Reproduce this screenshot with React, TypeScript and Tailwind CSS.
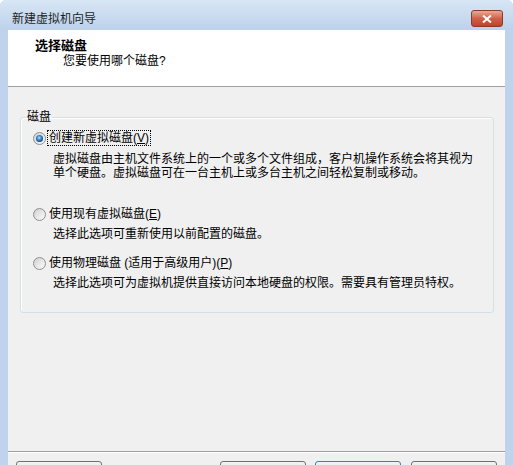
// Windows 7 style "新建虚拟机向导" dialog – select disk page

const Radio = ({ checked }: { checked?: boolean }) => (
  <span className="flex h-[13px] w-[13px] shrink-0 items-center justify-center rounded-full border border-[#8e8f8f] bg-linear-to-br from-[#d0d0d0] to-[#fbfbfb]">
    {checked ? (
      <span className="h-[7px] w-[7px] rounded-full bg-[radial-gradient(circle_at_45%_40%,#b6e4fb_0%,#3d8fd0_35%,#0f3f78_75%)]" />
    ) : (
      <span className="h-[7px] w-[7px] rounded-full bg-linear-to-br from-[#d9d9d9] to-[#f6f6f6]" />
    )}
  </span>
);

const Option = ({
  label,
  hint,
  mnemonic,
  checked,
  focused,
  className,
}: {
  label: string;
  hint: React.ReactNode;
  mnemonic: string;
  checked?: boolean;
  focused?: boolean;
  className?: string;
}) => {
  return (
    <div className={className}>
      <div className="flex h-[16px] items-center">
        <Radio checked={checked} />
        <span
          className={
            "ml-[1px] border px-[1px] leading-[14px] whitespace-nowrap " +
            (focused ? "border-dotted border-black" : "border-transparent")
          }
        >
          {label}(<u>{mnemonic}</u>)
        </span>
      </div>
      {hint}
    </div>
  );
};

// the button captions sit below the window's visible edge, so only the frames show
const WizardButton = ({
  label,
  primary,
  className,
}: {
  label: string;
  primary?: boolean;
  className?: string;
}) => (
  <button
    aria-label={label}
    className={
      "h-[23px] w-[86px] shrink-0 rounded-[3px] border bg-linear-to-b from-[#f2f2f2] to-[#dcdcdc] " +
      (primary ? "border-[#3c7fb1] " : "border-[#707070] ") +
      (className ?? "")
    }
  />
);

export default function App() {
  return (
    <div className="flex h-[465px] w-[513px] flex-col overflow-hidden rounded-t-[6px] bg-[#bfd4ec] font-['Liberation_Sans','Noto_Sans_CJK_SC',sans-serif] text-[12px] text-black">
      {/* title bar */}
      <div className="flex h-[30px] shrink-0 items-start justify-between bg-linear-to-b from-[#d8e6f5] to-[#bcd2eb] pr-[10px] pl-[12px]">
        <span className="mt-[12px] leading-[14px] text-[#1e1e1e]">新建虚拟机向导</span>
        <button className="mt-[10px] flex h-[17px] w-[32px] items-center justify-center rounded-[3px] border border-[#8c3a2c] bg-linear-to-b from-[#e9a796] via-[#d0604a] to-[#c3412b]">
          <svg width="10" height="8" viewBox="0 0 10 8">
            <path d="M1 0.5 L9 7.5 M9 0.5 L1 7.5" stroke="#fff" strokeWidth="2" />
          </svg>
        </button>
      </div>

      {/* client area */}
      <div className="flex min-h-0 flex-1 px-[8px]">
        <div className="flex flex-1 flex-col bg-[#f0f0f0]">
          {/* header */}
          <div className="h-[57px] shrink-0 border-b border-[#a0a0a0] bg-white pt-[8px]">
            <div className="pl-[27px] text-[13px] leading-[16px] font-bold">选择磁盘</div>
            <div className="pl-[55px] leading-[14px]">您要使用哪个磁盘?</div>
          </div>

          {/* group box */}
          <fieldset className="mt-[23px] mr-[11px] ml-[12px] shrink-0 rounded-[3px] border border-[#d5dfe5] shadow-[inset_1px_1px_0_#fff]">
            <legend className="ml-[5px] px-[1px] leading-[14px]">磁盘</legend>
            <div className="pt-[6px] pb-[22px] pl-[12px]">
              <Option
                label="创建新虚拟磁盘"
                mnemonic="V"
                checked
                focused
                hint={
                  <p className="mt-[6px] pl-[20px] leading-[14px] whitespace-nowrap">
                    虚拟磁盘由主机文件系统上的一个或多个文件组成，客户机操作系统会将其视为
                    <br />
                    单个硬盘。虚拟磁盘可在一台主机上或多台主机之间轻松复制或移动。
                  </p>
                }
              />
              <Option
                className="mt-[26px]"
                label="使用现有虚拟磁盘"
                mnemonic="E"
                hint={
                  <p className="mt-[5px] pl-[20px] leading-[14px] whitespace-nowrap">
                    选择此选项可重新使用以前配置的磁盘。
                  </p>
                }
              />
              <Option
                className="mt-[14px]"
                label="使用物理磁盘 (适用于高级用户)"
                mnemonic="P"
                hint={
                  <p className="mt-[5px] pl-[20px] leading-[14px] whitespace-nowrap">
                    选择此选项可为虚拟机提供直接访问本地硬盘的权限。需要具有管理员特权。
                  </p>
                }
              />
            </div>
          </fieldset>

          {/* footer */}
          <div className="mt-[138px] flex shrink-0 border-t border-[#a0a0a0] px-[8px] pt-[9px] shadow-[inset_0_1px_0_#fff]">
            <WizardButton label="帮助" />
            <div className="flex-1" />
            <WizardButton label="< 上一步(B)" />
            <WizardButton label="下一步(N) >" primary className="ml-[9px]" />
            <WizardButton label="取消" className="ml-[10px]" />
          </div>
        </div>
      </div>
    </div>
  );
}
